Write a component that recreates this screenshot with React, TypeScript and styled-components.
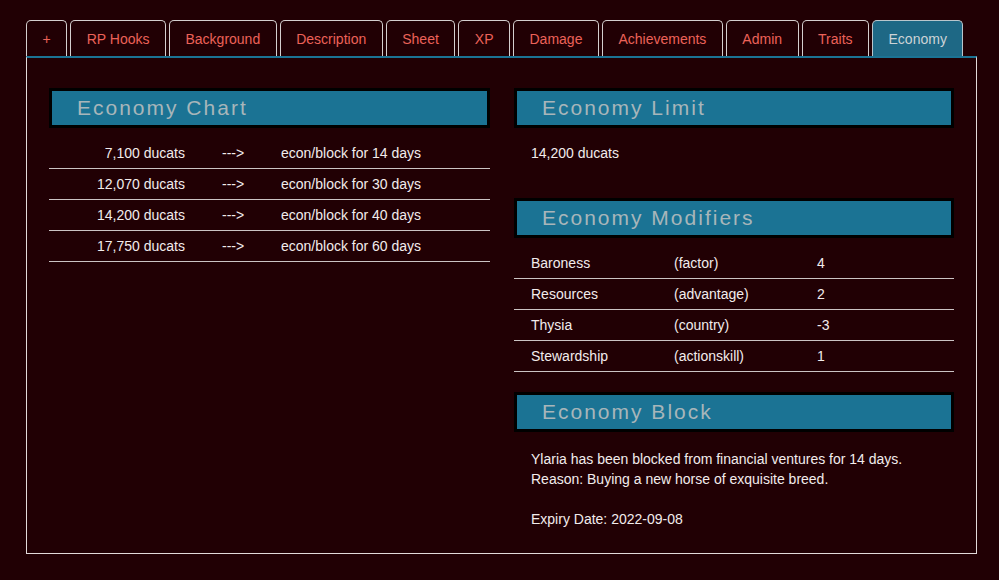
import React, {FunctionComponent} from "react";
import styled, {createGlobalStyle} from "styled-components";

const GlobalStyle = createGlobalStyle`
  body {
    margin: 0;
    background: #210004;
    font-family: "Liberation Sans", Arial, sans-serif;
    font-size: 14px;
    color: #f2ecec;
  }
`;

const Page = styled.div`
  padding: 20px 22px 26px 26px;
  width: 951px;
`;

const TabBar = styled.ul`
  display: flex;
  gap: 3px;
  margin: 0;
  padding: 0;
  list-style: none;
`;

const Tab = styled.li<{ $active?: boolean }>`
  height: 35px;
  line-height: 36px;
  padding: 0 15.5px;
  border: 1px solid #d4cfcf;
  border-bottom: none;
  border-radius: 5px 5px 0 0;
  font-size: 14px;
  color: ${p => (p.$active ? "#cdd3d6" : "#ec6259")};
  background: ${p => (p.$active ? "#1e6885" : "transparent")};
  border-color: ${p => (p.$active ? "#b9c6cc" : "#d4cfcf")};
`;

const Panel = styled.div`
  box-sizing: border-box;
  border: 1px solid #e2dada;
  border-top: 2px solid #1b7394;
  height: 498px;
  padding: 30px 22px 0;
  display: grid;
  grid-template-columns: 441px 440px;
  column-gap: 24px;
  align-items: start;
`;

const Column = styled.div`
  display: flex;
  flex-direction: column;
`;

const SectionHeader = styled.h2`
  margin: 0 0 10px;
  height: 34px;
  line-height: 34px;
  border: 3px solid #000;
  background: #1b7394;
  padding-left: 25px;
  font-size: 21px;
  font-weight: normal;
  letter-spacing: 2px;
  color: #a8b6ba;
`;

const Table = styled.div<{ $cols: string }>`
  display: grid;
  grid-template-columns: ${p => p.$cols};
  margin-bottom: 20px;
`;

const Cell = styled.div<{ $align?: string; $pad?: number }>`
  height: 30px;
  line-height: 30px;
  border-bottom: 1px solid #cbc4c4;
  text-align: ${p => p.$align || "left"};
  padding-left: ${p => p.$pad || 0}px;
  white-space: nowrap;
`;

const LimitValue = styled.div`
  height: 30px;
  line-height: 30px;
  padding-left: 17px;
  margin-bottom: 30px;
`;

const BlockText = styled.div`
  padding: 7px 0 0 17px;
  line-height: 20px;
`;

const chart = [
  ["7,100 ducats", "econ/block for 14 days"],
  ["12,070 ducats", "econ/block for 30 days"],
  ["14,200 ducats", "econ/block for 40 days"],
  ["17,750 ducats", "econ/block for 60 days"],
];

const modifiers = [
  ["Baroness", "(factor)", "4"],
  ["Resources", "(advantage)", "2"],
  ["Thysia", "(country)", "-3"],
  ["Stewardship", "(actionskill)", "1"],
];

const tabs = ["+", "RP Hooks", "Background", "Description", "Sheet", "XP", "Damage", "Achievements", "Admin", "Traits", "Economy"];

const App: FunctionComponent = () => (
  <Page>
    <GlobalStyle />
    <TabBar>
      {tabs.map(t => (
        <Tab key={t} $active={t === "Economy"}>{t}</Tab>
      ))}
    </TabBar>
    <Panel>
      <Column>
        <SectionHeader>Economy Chart</SectionHeader>
        <Table $cols="136px 96px 1fr">
          {chart.map(([amount, result]) => (
            <React.Fragment key={amount}>
              <Cell $align="right">{amount}</Cell>
              <Cell $pad={37}>---&gt;</Cell>
              <Cell>{result}</Cell>
            </React.Fragment>
          ))}
        </Table>
      </Column>
      <Column>
        <SectionHeader>Economy Limit</SectionHeader>
        <LimitValue>14,200 ducats</LimitValue>
        <SectionHeader>Economy Modifiers</SectionHeader>
        <Table $cols="160px 143px 1fr">
          {modifiers.map(([name, kind, value]) => (
            <React.Fragment key={name}>
              <Cell $pad={17}>{name}</Cell>
              <Cell>{kind}</Cell>
              <Cell>{value}</Cell>
            </React.Fragment>
          ))}
        </Table>
        <SectionHeader>Economy Block</SectionHeader>
        <BlockText>
          Ylaria has been blocked from financial ventures for 14 days.<br />
          Reason: Buying a new horse of exquisite breed.<br />
          <br />
          Expiry Date: 2022-09-08
        </BlockText>
      </Column>
    </Panel>
  </Page>
);

export default App;
